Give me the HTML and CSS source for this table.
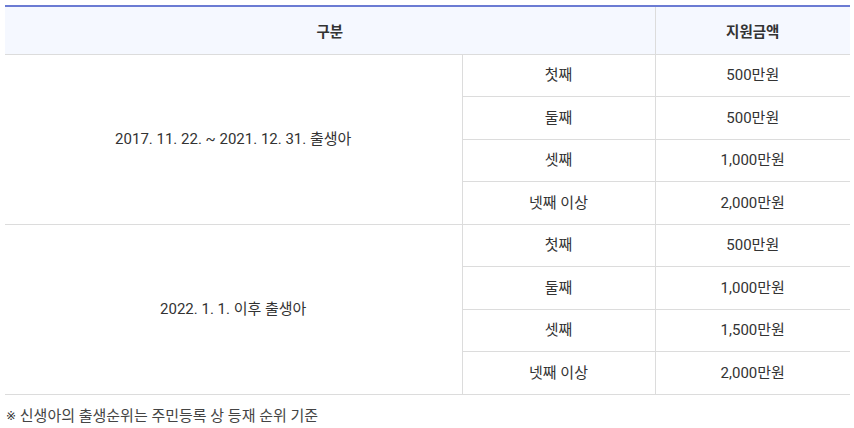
FILE: index.html
```html
<!DOCTYPE html>
<html lang="ko">
<head>
<meta charset="utf-8">
<link rel="stylesheet" href="styles.css">
</head>
<body>
<div class="wrap">
  <table class="tbl">
    <colgroup>
      <col class="c1"><col class="c2"><col class="c3">
    </colgroup>
    <thead>
      <tr><th colspan="2">구분</th><th class="last">지원금액</th></tr>
    </thead>
    <tbody>
      <tr><td rowspan="4" class="period">2017. 11. 22. ~ 2021. 12. 31. 출생아</td><td>첫째</td><td class="last">500만원</td></tr>
      <tr><td>둘째</td><td class="last">500만원</td></tr>
      <tr><td>셋째</td><td class="last">1,000만원</td></tr>
      <tr><td>넷째 이상</td><td class="last">2,000만원</td></tr>
      <tr><td rowspan="4" class="period">2022. 1. 1. 이후 출생아</td><td>첫째</td><td class="last">500만원</td></tr>
      <tr><td>둘째</td><td class="last">1,000만원</td></tr>
      <tr><td>셋째</td><td class="last">1,500만원</td></tr>
      <tr><td>넷째 이상</td><td class="last">2,000만원</td></tr>
    </tbody>
  </table>
  <p class="note"><span class="mark">※</span> 신생아의 출생순위는 주민등록 상 등재 순위 기준</p>
</div>
</body>
</html>
```
FILE: styles.css
```css
html, body {
  margin: 0;
  padding: 0;
  background: #fff;
}
body {
  font-family: Roboto, "Noto Sans CJK KR", sans-serif;
  color: #333;
}
.wrap {
  padding: 5px 4px 0 5px;
}
.tbl {
  width: 845px;
  border-collapse: collapse;
  table-layout: fixed;
  border-top: 2px solid #6b7bd3;
}
.c1 { width: 457px; }
.c2 { width: 193px; }
.c3 { width: 195px; }
.tbl th {
  height: 46.5px;
  padding: 0;
  background: #f5f8ff;
  font-size: 14.5px;
  font-weight: 700;
  color: #333;
  text-align: center;
  border-bottom: 1px solid #dcdcdc;
  border-right: 1px solid #dcdcdc;
}
.tbl td {
  height: 41.5px;
  padding: 0;
  font-size: 15px;
  line-height: 20px;
  color: #333;
  text-align: center;
  border-bottom: 1px solid #dcdcdc;
  border-right: 1px solid #dcdcdc;
}
.tbl th.last, .tbl td.last {
  border-right: 0;
}
.note {
  margin: 10px 0 0 0;
  padding-left: 1px;
  font-size: 15px;
  line-height: 22px;
  color: #444;
}
.note .mark {
  font-family: "DejaVu Sans", sans-serif;
  font-size: 12px;
  vertical-align: 1px;
  color: #333;
}
```
